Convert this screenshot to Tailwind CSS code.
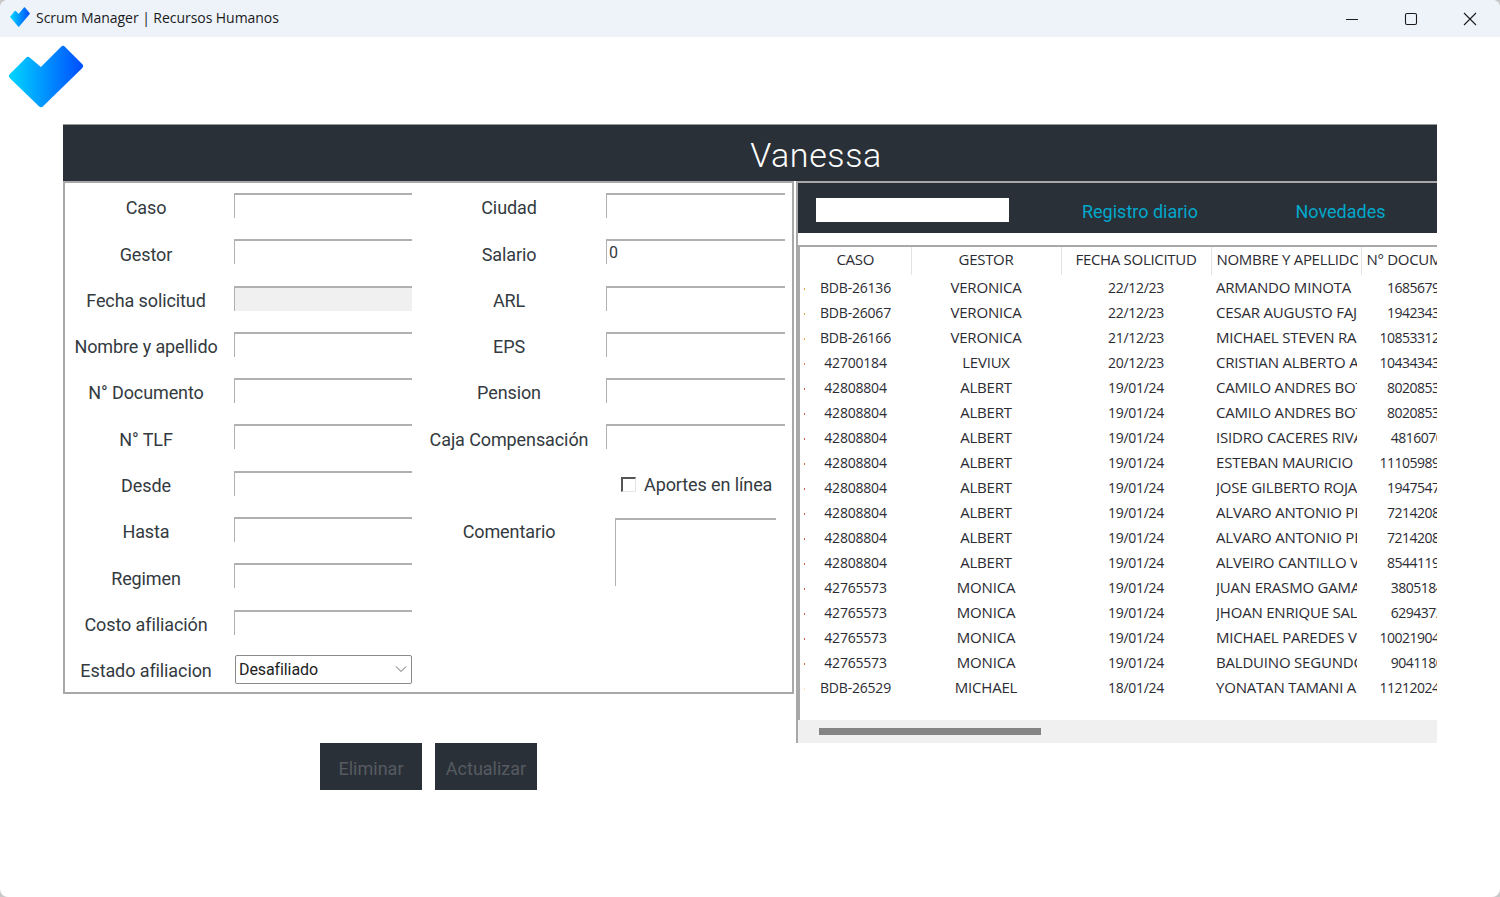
<!DOCTYPE html>
<html lang="en">
<head>
    <meta charset="UTF-8">
    <title>Scrum Manager | Recursos Humanos</title>
    <script src="https://cdn.jsdelivr.net/npm/@tailwindcss/browser@4"></script>
</head>
<body class="bg-[#c9c9c9] overflow-hidden">
<div class="w-[1500px] h-[897px] bg-white rounded-lg overflow-hidden font-['Roboto',sans-serif] text-[#333a40]">

    <!-- title bar -->
    <div class="h-[37px] bg-[#eef3fa] flex items-center">
        <svg class="ml-[10px] w-[20px] h-[20px] -mt-[3px]" viewBox="0 0 76 63" preserveAspectRatio="none">
            <defs>
                <linearGradient id="logoSmall" gradientUnits="userSpaceOnUse" x1="5" y1="30" x2="72" y2="30">
                    <stop offset="0" stop-color="#00cfff"/>
                    <stop offset="1" stop-color="#0052ff"/>
                </linearGradient>
            </defs>
            <polygon points="4,31 20,15 33,26 55,4 72,21 33,59" fill="url(#logoSmall)" stroke="url(#logoSmall)" stroke-width="6" stroke-linejoin="round"/>
        </svg>
        <span class="ml-[6px] -mt-[3px] text-[14px] text-[#1a1a1a] font-['Open_Sans',sans-serif] tracking-[-0.05px]">Scrum Manager | Recursos Humanos</span>
        <div class="ml-auto flex items-center">
            <div class="w-[59px] h-[37px] flex items-center justify-center">
                <svg class="w-[14px] h-[14px]" viewBox="0 0 14 14"><path d="M1 7.5H13" stroke="#1a1a1a" stroke-width="1.1"/></svg>
            </div>
            <div class="w-[59px] h-[37px] flex items-center justify-center">
                <svg class="w-[14px] h-[14px]" viewBox="0 0 14 14"><rect x="1.5" y="1.5" width="11" height="11" rx="1.5" fill="none" stroke="#1a1a1a" stroke-width="1.1"/></svg>
            </div>
            <div class="w-[59px] h-[37px] mr-[1px] flex items-center justify-center">
                <svg class="w-[14px] h-[14px]" viewBox="0 0 14 14"><path d="M1 1L13 13M13 1L1 13" stroke="#1a1a1a" stroke-width="1.1"/></svg>
            </div>
        </div>
    </div>

    <!-- logo row -->
    <div class="h-[87px] pl-[8px] pt-[8px]">
        <svg class="w-[76px] h-[63px]" viewBox="0 0 76 63">
            <defs>
                <linearGradient id="logoBig" gradientUnits="userSpaceOnUse" x1="5" y1="30" x2="72" y2="30">
                    <stop offset="0" stop-color="#00cfff"/>
                    <stop offset="1" stop-color="#0052ff"/>
                </linearGradient>
            </defs>
            <polygon points="4,31 20,15 33,26 55,4 72,21 33,59" fill="url(#logoBig)" stroke="url(#logoBig)" stroke-width="6" stroke-linejoin="round"/>
        </svg>
    </div>

    <main class="ml-[63px] w-[1374px]">
        <div class="h-[57px] bg-[#2a3038] border-t border-[#999] flex items-center justify-center pt-[5px] pl-[132px]">
            <h1 class="text-[34px] font-light tracking-[0.6px] text-white">Vanessa</h1>
        </div>

        <div class="flex items-start">
            <div class="w-[731px]">
                <form class="h-[513px] border-2 border-[#a8a8a8] pt-[10px] grid grid-cols-[169px_178px_194px_179px] auto-rows-[46.3px] text-[18px] tracking-[-0.1px]">
                    <label class="h-[29.6px] pr-[7px] flex items-center justify-center">Caso</label>
                    <div class="h-[25px] border-t-2 border-l border-[#b0b0b0]"></div>
                    <label class="h-[29.6px] flex items-center justify-center">Ciudad</label>
                    <div class="h-[25px] border-t-2 border-l border-[#b0b0b0]"></div>

                    <label class="h-[29.6px] pr-[7px] flex items-center justify-center">Gestor</label>
                    <div class="h-[25px] border-t-2 border-l border-[#b0b0b0]"></div>
                    <label class="h-[29.6px] flex items-center justify-center">Salario</label>
                    <div class="h-[25px] border-t-2 border-l border-[#b0b0b0] pl-[2px] text-[16px] leading-[24px]">0</div>

                    <label class="h-[29.6px] pr-[7px] flex items-center justify-center">Fecha solicitud</label>
                    <div class="h-[25px] border-t-2 border-l border-[#b0b0b0] bg-[#f0f0f0]"></div>
                    <label class="h-[29.6px] flex items-center justify-center">ARL</label>
                    <div class="h-[25px] border-t-2 border-l border-[#b0b0b0]"></div>

                    <label class="h-[29.6px] pr-[7px] flex items-center justify-center">Nombre y apellido</label>
                    <div class="h-[25px] border-t-2 border-l border-[#b0b0b0]"></div>
                    <label class="h-[29.6px] flex items-center justify-center">EPS</label>
                    <div class="h-[25px] border-t-2 border-l border-[#b0b0b0]"></div>

                    <label class="h-[29.6px] pr-[7px] flex items-center justify-center">N° Documento</label>
                    <div class="h-[25px] border-t-2 border-l border-[#b0b0b0]"></div>
                    <label class="h-[29.6px] flex items-center justify-center">Pension</label>
                    <div class="h-[25px] border-t-2 border-l border-[#b0b0b0]"></div>

                    <label class="h-[29.6px] pr-[7px] flex items-center justify-center">N° TLF</label>
                    <div class="h-[25px] border-t-2 border-l border-[#b0b0b0]"></div>
                    <label class="h-[29.6px] flex items-center justify-center">Caja Compensación</label>
                    <div class="h-[25px] border-t-2 border-l border-[#b0b0b0]"></div>

                    <label class="h-[29.6px] pr-[7px] flex items-center justify-center">Desde</label>
                    <div class="h-[25px] border-t-2 border-l border-[#b0b0b0]"></div>
                    <div class="col-span-2 pl-[209px] h-[27px] flex items-center">
                        <span class="w-[15px] h-[15px] border-t-2 border-l-2 border-[#555] border-r border-b border-r-[#e5e5e5] border-b-[#e5e5e5]"></span>
                        <span class="ml-[8px] whitespace-nowrap">Aportes en línea</span>
                    </div>

                    <label class="h-[29.6px] pr-[7px] flex items-center justify-center">Hasta</label>
                    <div class="h-[25px] border-t-2 border-l border-[#b0b0b0]"></div>
                    <label class="h-[29.6px] flex items-center justify-center">Comentario</label>
                    <div class="row-span-3 ml-[9px] mt-[1px] w-[161px] h-[68px] border-t-2 border-l border-[#b0b0b0]"></div>

                    <label class="h-[29.6px] pr-[7px] flex items-center justify-center">Regimen</label>
                    <div class="h-[25px] border-t-2 border-l border-[#b0b0b0]"></div>
                    <div class="col-start-3"></div>

                    <label class="h-[29.6px] pr-[7px] flex items-center justify-center">Costo afiliación</label>
                    <div class="h-[25px] border-t-2 border-l border-[#b0b0b0]"></div>
                    <div class="col-start-3"></div>

                    <label class="h-[29.6px] pr-[7px] flex items-center justify-center">Estado afiliacion</label>
                    <div class="h-[29px] ml-[1px] -mt-[1px] border border-[#8a8a8a] rounded-[2px] flex items-center pl-[3px] pr-[4px] text-[16px] text-[#222]">
                        <span class="pt-[1px]">Desafiliado</span>
                        <svg class="ml-auto w-[12px] h-[8px]" viewBox="0 0 12 8"><path d="M1 1.5L6 6.5L11 1.5" fill="none" stroke="#666" stroke-width="1"/></svg>
                    </div>
                </form>

                <div class="mt-[49px] ml-[257px] flex gap-[13px]">
                    <button class="w-[102px] h-[47px] pt-[3px] bg-[#2a3038] text-[18px] text-[#565b61]">Eliminar</button>
                    <button class="w-[102px] h-[47px] pt-[3px] bg-[#2a3038] text-[18px] text-[#565b61]">Actualizar</button>
                </div>
            </div>

            <div class="ml-[2px] flex-1 min-w-0 h-[562px] border-l-2 border-t-2 border-[#a8a8a8] flex flex-col">
                <div class="h-[50px] bg-[#2a3038] flex items-center pl-[18px] text-[18px] text-[#00a8cc] whitespace-nowrap">
                    <div class="w-[193px] h-[24px] bg-white mt-[4px]"></div>
                    <a class="ml-[72px] w-[118px] pt-[7px] text-center">Registro diario</a>
                    <a class="ml-[96px] w-[91px] pt-[7px] text-center">Novedades</a>
                </div>
                <div class="h-[12px]"></div>
                <div class="h-[475px] border-t-2 border-l-2 border-[#a8a8a8] overflow-hidden">
                    <table class="table-fixed w-[673px] border-collapse font-['Open_Sans',sans-serif] text-[15px] tracking-[-0.2px] text-[#2b2b33] whitespace-nowrap">
                        <colgroup>
                            <col class="w-[111px]"><col class="w-[150px]"><col class="w-[150px]"><col class="w-[150px]"><col class="w-[112px]">
                        </colgroup>
                        <thead class="tracking-[-0.3px]">
                            <tr class="h-[28px]">
                                <th class="font-normal pb-[3px] border-r border-[#e3e3e3] text-center">CASO</th>
                                <th class="font-normal pb-[3px] border-r border-[#e3e3e3] text-center">GESTOR</th>
                                <th class="font-normal pb-[3px] border-r border-[#e3e3e3] text-center">FECHA SOLICITUD</th>
                                <th class="font-normal pb-[3px] border-r border-[#e3e3e3] text-left pl-[5px]"><div class="w-[141px] overflow-hidden">NOMBRE Y APELLIDO</div></th>
                                <th class="font-normal pb-[3px] overflow-hidden text-left pl-[5px]">N° DOCUMENTO</th>
                            </tr>
                        </thead>
                        <tbody class="text-center [&_tr]:h-[25px] [&_td:nth-child(4)]:text-left [&_td:nth-child(4)]:pl-[5px] [&_td:nth-child(1)]:text-[14px] [&_td:nth-child(1)]:tracking-[-0.2px] [&_td:nth-child(3)]:text-[14px] [&_td:nth-child(3)]:tracking-[-0.3px] [&_td:nth-child(5)]:text-[14px] [&_td:nth-child(5)]:tracking-[-0.5px]">
                            <tr><td class="relative"><span class="absolute left-[4px] top-[13px] w-px h-[2px] bg-[#f0a040]"></span>BDB-26136</td><td>VERONICA</td><td>22/12/23</td><td><div class="w-[141px] overflow-hidden">ARMANDO MINOTA</div></td><td>16856790</td></tr>
                            <tr><td class="relative"><span class="absolute left-[4px] top-[13px] w-px h-[2px] bg-[#f0a040]"></span>BDB-26067</td><td>VERONICA</td><td>22/12/23</td><td><div class="w-[141px] overflow-hidden">CESAR AUGUSTO FAJARDO</div></td><td>19423431</td></tr>
                            <tr><td class="relative"><span class="absolute left-[4px] top-[13px] w-px h-[2px] bg-[#f0a040]"></span>BDB-26166</td><td>VERONICA</td><td>21/12/23</td><td><div class="w-[141px] overflow-hidden">MICHAEL STEVEN RAMIREZ</div></td><td>1085331245</td></tr>
                            <tr><td class="relative"><span class="absolute left-[4px] top-[13px] w-px h-[2px] bg-[#e08050]"></span>42700184</td><td>LEVIUX</td><td>20/12/23</td><td><div class="w-[141px] overflow-hidden">CRISTIAN ALBERTO ARIAS</div></td><td>1043434310</td></tr>
                            <tr><td class="relative"><span class="absolute left-[4px] top-[13px] w-px h-[2px] bg-[#d06040]"></span>42808804</td><td>ALBERT</td><td>19/01/24</td><td><div class="w-[141px] overflow-hidden">CAMILO ANDRES BOTERO</div></td><td>80208531</td></tr>
                            <tr><td class="relative"><span class="absolute left-[4px] top-[13px] w-px h-[2px] bg-[#d06040]"></span>42808804</td><td>ALBERT</td><td>19/01/24</td><td><div class="w-[141px] overflow-hidden">CAMILO ANDRES BOTERO</div></td><td>80208531</td></tr>
                            <tr><td class="relative"><span class="absolute left-[4px] top-[13px] w-px h-[2px] bg-[#d06040]"></span>42808804</td><td>ALBERT</td><td>19/01/24</td><td><div class="w-[141px] overflow-hidden">ISIDRO CACERES RIVAS</div></td><td>4816070</td></tr>
                            <tr><td class="relative"><span class="absolute left-[4px] top-[13px] w-px h-[2px] bg-[#d06040]"></span>42808804</td><td>ALBERT</td><td>19/01/24</td><td><div class="w-[141px] overflow-hidden">ESTEBAN MAURICIO TORO</div></td><td>1110598912</td></tr>
                            <tr><td class="relative"><span class="absolute left-[4px] top-[13px] w-px h-[2px] bg-[#d06040]"></span>42808804</td><td>ALBERT</td><td>19/01/24</td><td><div class="w-[141px] overflow-hidden">JOSE GILBERTO ROJAS</div></td><td>19475471</td></tr>
                            <tr><td class="relative"><span class="absolute left-[4px] top-[13px] w-px h-[2px] bg-[#d06040]"></span>42808804</td><td>ALBERT</td><td>19/01/24</td><td><div class="w-[141px] overflow-hidden">ALVARO ANTONIO PEREZ</div></td><td>72142081</td></tr>
                            <tr><td class="relative"><span class="absolute left-[4px] top-[13px] w-px h-[2px] bg-[#d06040]"></span>42808804</td><td>ALBERT</td><td>19/01/24</td><td><div class="w-[141px] overflow-hidden">ALVARO ANTONIO PEREZ</div></td><td>72142081</td></tr>
                            <tr><td class="relative"><span class="absolute left-[4px] top-[13px] w-px h-[2px] bg-[#d06040]"></span>42808804</td><td>ALBERT</td><td>19/01/24</td><td><div class="w-[141px] overflow-hidden">ALVEIRO CANTILLO VEGA</div></td><td>85441190</td></tr>
                            <tr><td class="relative"><span class="absolute left-[4px] top-[13px] w-px h-[2px] bg-[#d06040]"></span>42765573</td><td>MONICA</td><td>19/01/24</td><td><div class="w-[141px] overflow-hidden">JUAN ERASMO GAMARRA</div></td><td>3805184</td></tr>
                            <tr><td class="relative"><span class="absolute left-[4px] top-[13px] w-px h-[2px] bg-[#d06040]"></span>42765573</td><td>MONICA</td><td>19/01/24</td><td><div class="w-[141px] overflow-hidden">JHOAN ENRIQUE SALAS</div></td><td>6294372</td></tr>
                            <tr><td class="relative"><span class="absolute left-[4px] top-[13px] w-px h-[2px] bg-[#d06040]"></span>42765573</td><td>MONICA</td><td>19/01/24</td><td><div class="w-[141px] overflow-hidden">MICHAEL PAREDES VERA</div></td><td>1002190412</td></tr>
                            <tr><td class="relative"><span class="absolute left-[4px] top-[13px] w-px h-[2px] bg-[#d06040]"></span>42765573</td><td>MONICA</td><td>19/01/24</td><td><div class="w-[141px] overflow-hidden">BALDUINO SEGUNDO</div></td><td>9041180</td></tr>
                            <tr><td class="relative"><span class="absolute left-[4px] top-[13px] w-px h-[2px] bg-[#fbe0c0]"></span>BDB-26529</td><td>MICHAEL</td><td>18/01/24</td><td><div class="w-[141px] overflow-hidden">YONATAN TAMANI ARIAS</div></td><td>1121202411</td></tr>
                        </tbody>
                    </table>
                </div>
                <div class="h-[23px] bg-[#f0f0f0] pl-[21px] pt-[8px]">
                    <div class="w-[222px] h-[7px] bg-[#858585]"></div>
                </div>
            </div>
        </div>
    </main>
</div>
</body>
</html>
